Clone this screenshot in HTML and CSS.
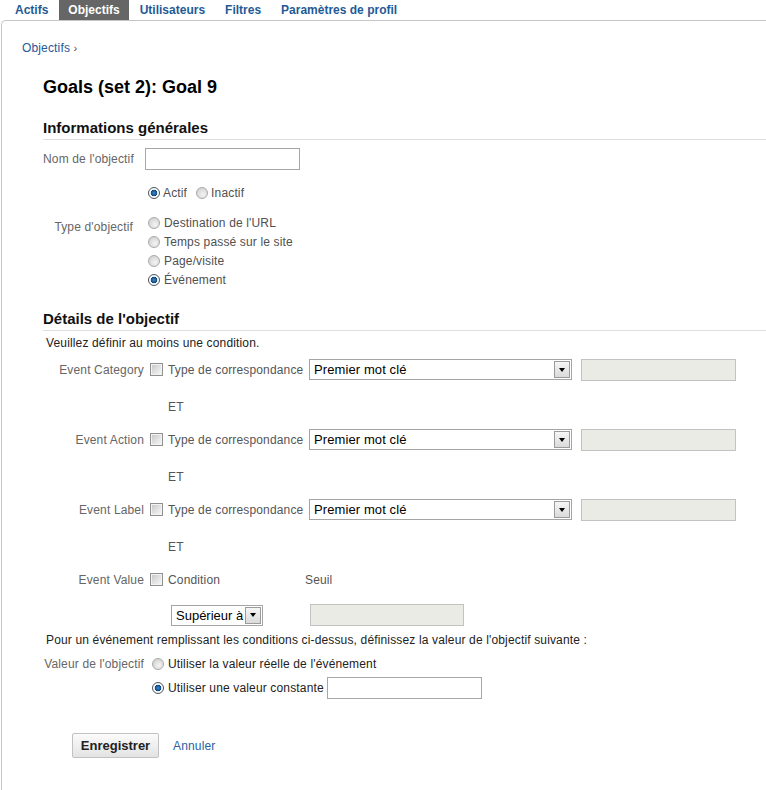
FILE: index.html
```html
<!DOCTYPE html>
<html lang="fr">
<head>
<meta charset="utf-8">
<title>Objectifs</title>
<link rel="stylesheet" href="styles.css">
</head>
<body>
<nav class="tabs">
  <a class="tab" href="#">Actifs</a>
  <a class="tab active" href="#">Objectifs</a>
  <a class="tab" href="#">Utilisateurs</a>
  <a class="tab" href="#">Filtres</a>
  <a class="tab" href="#">Paramètres de profil</a>
</nav>
<main class="panel">
  <div class="breadcrumb"><a href="#">Objectifs</a> <span class="sep">›</span></div>
  <div class="content">
    <h1 class="title">Goals (set 2): Goal 9</h1>

    <h2 class="section-title">Informations générales</h2>
    <div class="name-row">
      <label class="label">Nom de l'objectif</label>
      <input class="text-input" type="text">
    </div>
    <div class="status-row">
      <label class="opt"><input type="radio" class="radio" name="status" checked>Actif</label>
      <label class="opt"><input type="radio" class="radio" name="status">Inactif</label>
    </div>
    <div class="type-row">
      <span class="label type-label">Type d'objectif</span>
      <div class="opt-list">
        <label class="opt"><input type="radio" class="radio" name="type">Destination de l'URL</label>
        <label class="opt"><input type="radio" class="radio" name="type">Temps passé sur le site</label>
        <label class="opt"><input type="radio" class="radio" name="type">Page/visite</label>
        <label class="opt"><input type="radio" class="radio" name="type" checked>Événement</label>
      </div>
    </div>

    <h2 class="section-title details-title">Détails de l'objectif</h2>
    <p class="note">Veuillez définir au moins une condition.</p>

    <div class="event-row first">
      <span class="ev-label">Event Category</span>
      <input type="checkbox" class="check">
      <span class="ev-text">Type de correspondance</span>
      <div class="select wide"><span class="select-value">Premier mot clé</span><span class="arrow"></span></div>
      <input class="text-input disabled wide-gap" type="text" disabled>
    </div>
    <div class="et">ET</div>

    <div class="event-row">
      <span class="ev-label">Event Action</span>
      <input type="checkbox" class="check">
      <span class="ev-text">Type de correspondance</span>
      <div class="select wide"><span class="select-value">Premier mot clé</span><span class="arrow"></span></div>
      <input class="text-input disabled wide-gap" type="text" disabled>
    </div>
    <div class="et">ET</div>

    <div class="event-row">
      <span class="ev-label">Event Label</span>
      <input type="checkbox" class="check">
      <span class="ev-text">Type de correspondance</span>
      <div class="select wide"><span class="select-value">Premier mot clé</span><span class="arrow"></span></div>
      <input class="text-input disabled wide-gap" type="text" disabled>
    </div>
    <div class="et">ET</div>

    <div class="event-row">
      <span class="ev-label">Event Value</span>
      <input type="checkbox" class="check">
      <span class="ev-text short">Condition</span>
      <span class="ev-text plain">Seuil</span>
    </div>
    <div class="threshold-row">
      <div class="select narrow"><span class="select-value">Supérieur à</span><span class="arrow"></span></div>
      <input class="text-input disabled threshold-input" type="text" disabled>
    </div>

    <p class="note value-note">Pour un événement remplissant les conditions ci-dessus, définissez la valeur de l'objectif suivante :</p>
    <div class="value-row">
      <span class="ev-label">Valeur de l'objectif</span>
      <label class="opt dark"><input type="radio" class="radio value-radio" name="value">Utiliser la valeur réelle de l'événement</label>
    </div>
    <div class="value-row second">
      <label class="opt dark"><input type="radio" class="radio value-radio" name="value" checked>Utiliser une valeur constante</label>
      <input class="text-input const-input" type="text">
    </div>

    <div class="actions">
      <button class="btn" type="button">Enregistrer</button>
      <a class="cancel" href="#">Annuler</a>
    </div>
  </div>
</main>
</body>
</html>
```

FILE: styles.css
```css
* { box-sizing: border-box; }

html, body {
  margin: 0;
  padding: 0;
  height: 100%;
  overflow: hidden;
}

body {
  font-family: "Liberation Sans", Arial, sans-serif;
  font-size: 12px;
  letter-spacing: 0.15px;
  color: #222;
  background: #fff;
}

a { text-decoration: none; }

/* Tabs */
.tabs {
  display: flex;
  height: 20px;
  padding-left: 5px;
  letter-spacing: 0;
}

.tab {
  display: block;
  height: 20px;
  line-height: 20px;
  padding: 0 10px;
  font-weight: bold;
  font-size: 12px;
  color: #1f5a96;
}

.tab.active {
  background: #666;
  color: #fff;
  padding: 0 9px 0 9px;
  margin-left: 1px;
  margin-right: 1px;
}

/* Panel */
.panel {
  display: block;
  margin-left: 1px;
  min-height: calc(100% - 20px);
  border: 1px solid #c6c6c6;
  border-right: none;
  border-bottom: none;
  border-top-left-radius: 5px;
  padding: 20px 0 0 20px;
}

.breadcrumb {
  line-height: 15px;
  font-size: 12px;
  color: #444;
}

.breadcrumb a { color: #25599a; }
.breadcrumb .sep { font-size: 11px; }

.content {
  padding-left: 21px;
}

.title {
  margin: 20px 0 0;
  font-size: 18px;
  line-height: 22px;
  font-weight: bold;
  letter-spacing: 0;
  color: #000;
}

.section-title {
  margin: 21px 0 0;
  font-size: 15px;
  line-height: 18px;
  font-weight: bold;
  letter-spacing: 0;
  color: #111;
  padding-bottom: 2px;
  border-bottom: 1px solid #dedede;
}

.label {
  width: 102px;
  padding-right: 12px;
  text-align: right;
  color: #666;
  flex: none;
  white-space: nowrap;
}

.name-row {
  display: flex;
  align-items: center;
  margin-top: 8px;
  height: 22px;
}

.text-input {
  width: 155px;
  height: 22px;
  border: 1px solid #a7a7a7;
  background: #fff;
  margin: 0;
  padding: 2px 3px;
  font: inherit;
  flex: none;
}

.text-input.disabled {
  background: #ebebe5;
  border-color: #c2c2c2;
}

.status-row {
  display: flex;
  margin-top: 13px;
  padding-left: 102px;
  height: 19px;
}

.opt {
  display: flex;
  align-items: center;
  height: 19px;
  color: #505050;
  margin-right: 6px;
  white-space: nowrap;
}

.opt.dark { color: #222; margin-right: 0; }

.radio {
  -webkit-appearance: none;
  appearance: none;
  width: 12px;
  height: 12px;
  margin: 0 3px 0 3px;
  border-radius: 50%;
  border: 1px solid #a9a9a9;
  background: radial-gradient(circle at 60% 65%, #f4f4f4 0, #d6d6d6 70%);
  flex: none;
}

.radio:checked {
  border-color: #4b5663;
  background: radial-gradient(circle at 50% 50%, #3d8ad0 0, #15528e 2.6px, #0b3a6a 3.1px, #fff 3.6px, #f0f0f0 100%);
}

.type-row {
  display: flex;
  align-items: flex-start;
  margin-top: 11px;
}

.type-label { padding-top: 7px; line-height: 15px; }

.opt-list {
  display: flex;
  flex-direction: column;
}

.opt-list .opt .radio { margin-right: 4px; }

.details-title { margin-top: 21px; }

.note {
  margin: 5px 0 0;
  padding-left: 3px;
  line-height: 15px;
  color: #222;
  white-space: nowrap;
}

.event-row {
  display: flex;
  align-items: center;
  height: 21px;
  margin-top: 14px;
}

.event-row.first { margin-top: 8px; }

.ev-label {
  width: 101px;
  text-align: right;
  color: #666;
  flex: none;
  white-space: nowrap;
}

.check {
  -webkit-appearance: none;
  appearance: none;
  width: 13px;
  height: 13px;
  margin: 0 0 0 6px;
  border: 1px solid #8f8f8f;
  background: linear-gradient(135deg, #c4c4c4 0%, #e6e6e6 60%, #f7f7f7 100%);
  box-shadow: inset 0 0 0 1px #f3f3f3;
  flex: none;
}

.ev-text {
  margin-left: 5px;
  width: 141px;
  color: #555;
  flex: none;
  white-space: nowrap;
}

.ev-text.short { width: 137px; }
.ev-text.plain { margin-left: 0; width: auto; }

.select {
  display: flex;
  align-items: center;
  justify-content: space-between;
  height: 21px;
  border: 1px solid #a5a5a5;
  background: #fff;
  padding: 0 1px 0 4px;
  font-size: 13px;
  letter-spacing: 0.1px;
  color: #000;
  flex: none;
  white-space: nowrap;
}

.select.wide { width: 263px; }
.select.narrow { width: 92px; padding-left: 4px; letter-spacing: 0; }

.arrow {
  width: 16px;
  height: 17px;
  border: 1px solid #9b9b9b;
  background: linear-gradient(#f6f6f6, #dadada);
  display: flex;
  align-items: center;
  justify-content: center;
  flex: none;
}

.arrow::before {
  content: "";
  border-left: 3.5px solid transparent;
  border-right: 3.5px solid transparent;
  border-top: 4px solid #000;
}

.wide-gap { margin-left: 9px; }

.et {
  margin-top: 20px;
  padding-left: 125px;
  line-height: 15px;
  color: #555;
}

.threshold-row {
  display: flex;
  align-items: center;
  margin-top: 14px;
  padding-left: 128px;
  height: 22px;
}

.threshold-input {
  margin-left: 47px;
  width: 154px;
}

.value-note { margin-top: 7px; }

.value-row {
  display: flex;
  align-items: center;
  height: 19px;
  margin-top: 6px;
}

.value-row.second {
  height: 22px;
  margin-top: 4px;
  padding-left: 101px;
}

.value-radio { margin: 0 4px 0 8px; }

.const-input { margin-left: 3px; }

.actions {
  display: flex;
  align-items: center;
  margin-top: 34px;
  padding-left: 29px;
}

.btn {
  width: 87px;
  height: 25px;
  border: 1px solid #c2c2c2;
  border-radius: 2px;
  background: linear-gradient(#fbfbfb, #e3e3e3);
  font-family: "Liberation Sans", Arial, sans-serif;
  font-size: 13px;
  font-weight: bold;
  color: #222;
  padding: 0;
}

.cancel {
  margin-left: 14px;
  color: #2b5fa3;
  font-size: 12px;
}
```
